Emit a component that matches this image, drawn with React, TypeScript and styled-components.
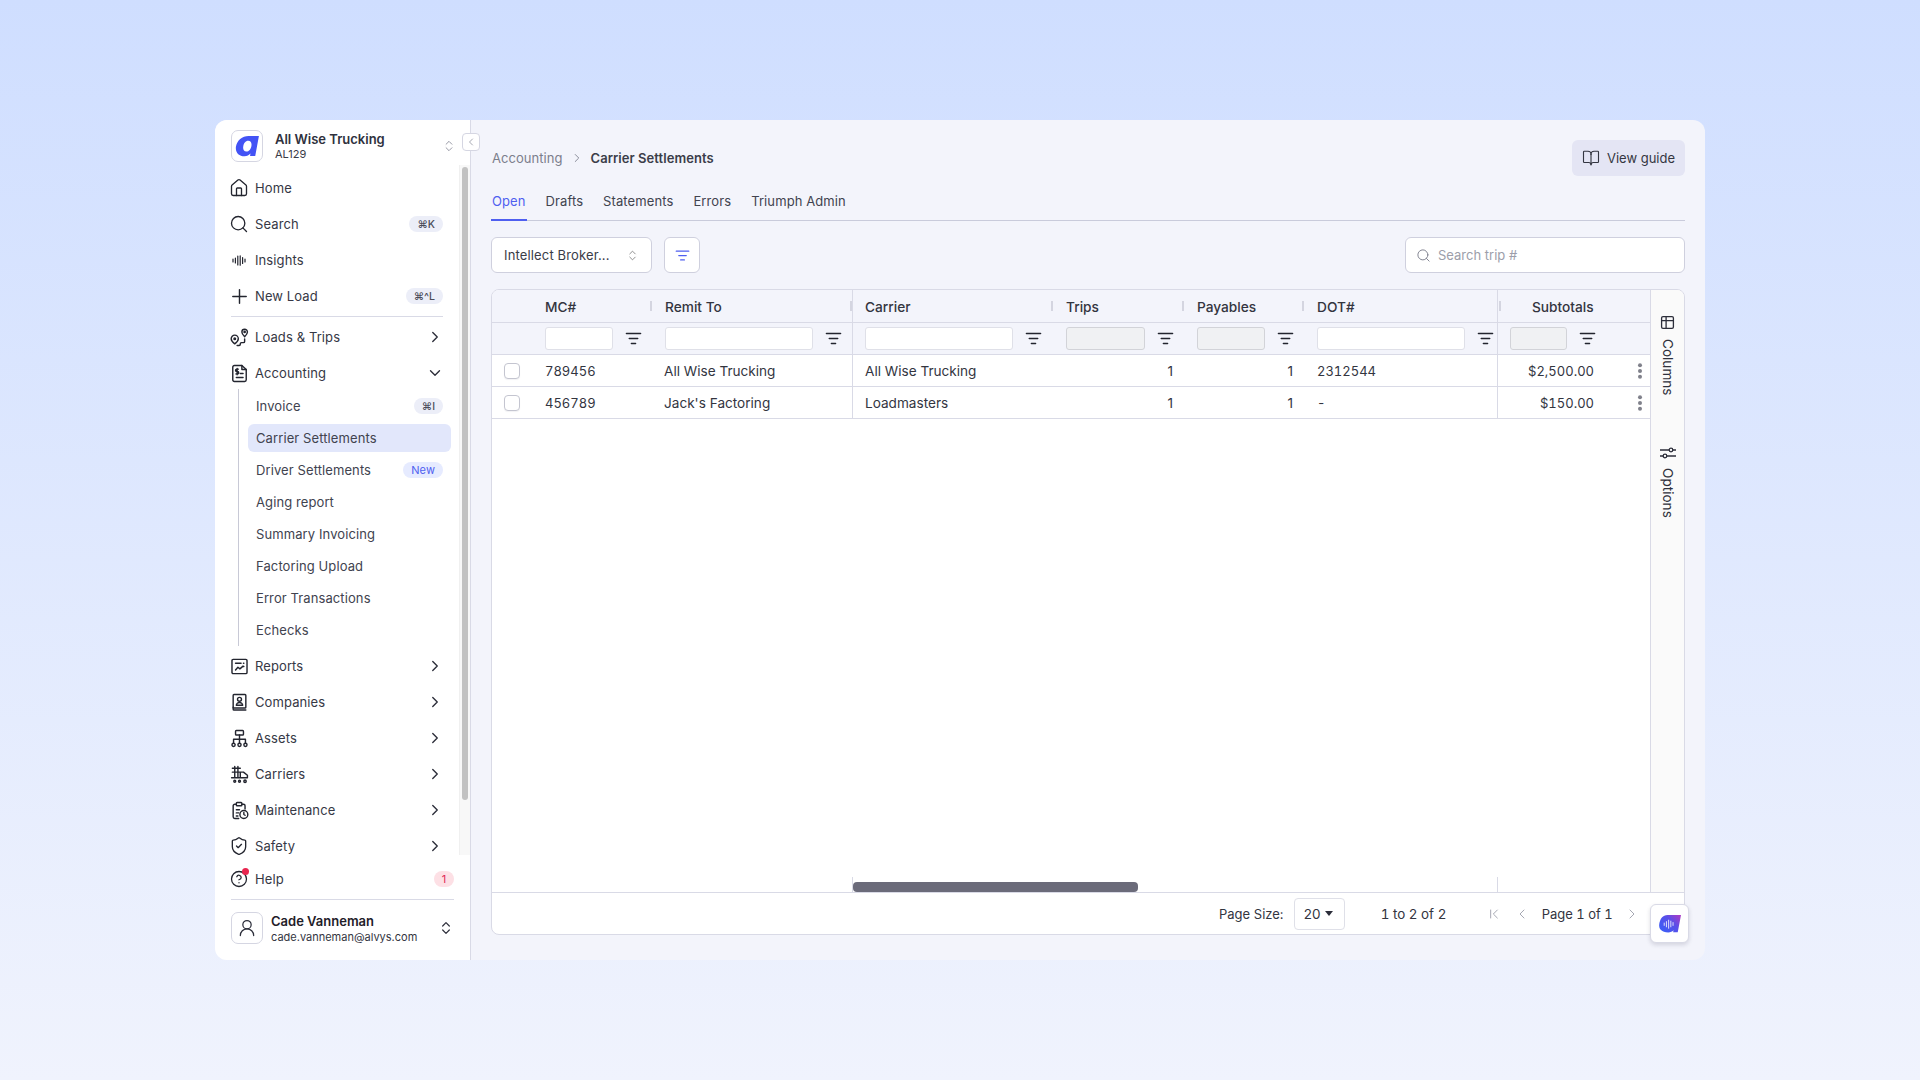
import React from "react";
import styled, { createGlobalStyle } from "styled-components";
import {
  House, Search, Plus, ChevronRight, ChevronDown, ChevronLeft, ChevronsUpDown,
  ShieldCheck, CircleHelp, UserRound, BookOpen, ListFilter, ChevronFirst,
} from "lucide-react";

const Global = createGlobalStyle`
  html, body { margin: 0; padding: 0; height: 100%; }
  body {
    font-family: Inter, "Liberation Sans", sans-serif;
    background: linear-gradient(180deg, #cfdeff 0%, #f0f3fd 100%);
    color: #2c2e3a;
    -webkit-font-smoothing: antialiased;
  }
  #root { height: 100vh; }
  * { box-sizing: border-box; }
  svg { flex: none; }
`;

const Page = styled.div`
  height: 100%;
  display: flex;
  align-items: center;
  justify-content: center;
`;
const Frame = styled.div`
  width: 1490px;
  height: 840px;
  display: flex;
  border-radius: 12px;
  overflow: hidden;
  background: #f3f4fb;
`;
const Sidebar = styled.aside`
  position: relative;
  width: 256px;
  flex: none;
  background: #fff;
  border-right: 1px solid #d9dae6;
  display: flex;
  flex-direction: column;
`;
const SideHead = styled.div`
  height: 45px;
  flex: none;
  padding: 10px 0 0 16px;
  display: flex;
  align-items: flex-start;
`;
const LogoBox = styled.div`
  width: 32px;
  height: 32px;
  border: 1px solid #d5d6e2;
  border-radius: 7px;
  display: flex;
  align-items: center;
  justify-content: center;
  flex: none;
  background: #fff;
`;
const OrgText = styled.div`
  margin-left: 12px;
  width: 166px;
  display: flex;
  flex-direction: column;
  padding-top: 1px;
`;
const OrgName = styled.div`
  font-size: 13px;
  line-height: 17px;
  font-weight: 600;
  color: #2f313d;
`;
const OrgCode = styled.div`
  font-size: 11px;
  line-height: 13px;
  color: #3a3c48;
`;
const OrgSwitch = styled.div`
  margin: 9px 0 0 1px;
  color: #8a8c99;
  display: flex;
`;
const CollapseBtn = styled.button`
  position: absolute;
  right: -10px;
  top: 13px;
  width: 18px;
  height: 18px;
  padding: 0;
  border: 1px solid #d5d6e2;
  border-radius: 4px;
  background: #fff;
  color: #8a8c99;
  display: flex;
  align-items: center;
  justify-content: center;
`;
const NavWrap = styled.div`
  height: 690px;
  flex: none;
  display: flex;
  overflow: hidden;
`;
const NavList = styled.nav`
  width: 244px;
  flex: none;
  padding: 5px 8px 0 16px;
  display: flex;
  flex-direction: column;
`;
const ScrollTrack = styled.div`
  width: 11px;
  flex: none;
  background: #f8f8f8;
  padding: 2px 2px 0 2px;
  border-left: 1px solid #f0f0f0;
`;
const ScrollThumb = styled.div`
  width: 6px;
  height: 633px;
  border-radius: 3px;
  background: #c2c2c2;
`;
const NavRow = styled.div`
  height: 36px;
  flex: none;
  width: 212px;
  display: flex;
  align-items: center;
  gap: 8px;
  font-size: 13px;
  color: #363845;
  letter-spacing: 0.1px;
`;
const NavIcon = styled.span`
  width: 16px;
  height: 16px;
  flex: none;
  display: flex;
  align-items: center;
  justify-content: center;
  color: #23252f;
`;
const NavLabel = styled.span`
  flex: 1;
  white-space: nowrap;
`;
const Kbd = styled.span`
  height: 16px;
  padding: 0 8px;
  border-radius: 8px;
  background: #eceef8;
  color: #4a4c58;
  font-size: 10.5px;
  font-weight: 500;
  display: flex;
  align-items: center;
  letter-spacing: 0;
`;
const NewBadge = styled.span`
  height: 16px;
  padding: 0 8px;
  border-radius: 8px;
  background: #e6ebff;
  color: #4f5ff0;
  font-size: 11px;
  display: flex;
  align-items: center;
`;
const Chevron = styled.span`
  width: 16px;
  height: 16px;
  display: flex;
  align-items: center;
  justify-content: center;
  color: #2c2e3a;
`;
const NavDivider = styled.div<{ $w?: number }>`
  height: 1px;
  flex: none;
  width: ${(p) => p.$w ?? 212}px;
  margin: 2px 0;
  background: #d9dae6;
`;
const SubList = styled.div`
  margin: -2px 0 2px 7px;
  border-left: 1px solid #c8c9d6;
  padding: 1px 0 0 9px;
  height: 257px;
  flex: none;
  width: 213px;
  display: flex;
  flex-direction: column;
`;
const SubRow = styled.div<{ $active?: boolean }>`
  height: 28px;
  margin: 2px 0;
  flex: none;
  padding: 0 8px;
  border-radius: 6px;
  display: flex;
  align-items: center;
  justify-content: space-between;
  font-size: 13px;
  letter-spacing: 0.1px;
  color: #41434f;
  background: ${(p) => (p.$active ? "#e2e7fb" : "transparent")};
`;
const SideFoot = styled.div`
  flex: 1;
  padding: 6px 16px 0;
  display: flex;
  flex-direction: column;
`;
const HelpRow = styled(NavRow)`
  width: 223px;
`;
const IconDotWrap = styled(NavIcon)`
  position: relative;
`;
const RedDot = styled.span`
  position: absolute;
  right: -2px;
  top: -3px;
  width: 7px;
  height: 7px;
  border-radius: 50%;
  background: #e8264f;
`;
const HelpBadge = styled.span`
  width: 20px;
  height: 16px;
  border-radius: 8px;
  background: #fde0e5;
  color: #df2a55;
  font-size: 11px;
  display: flex;
  align-items: center;
  justify-content: center;
`;
const UserRow = styled.div`
  margin-top: 10px;
  display: flex;
  align-items: center;
  width: 223px;
`;
const UserText = styled.div`
  margin-left: 8px;
  flex: 1;
  display: flex;
  flex-direction: column;
`;
const UserName = styled.div`
  font-size: 13px;
  line-height: 17px;
  font-weight: 600;
  color: #1f2029;
`;
const UserMail = styled.div`
  font-size: 11px;
  line-height: 14px;
  color: #33353f;
`;

const Main = styled.main`
  flex: 1;
  min-width: 0;
  padding: 20px 20px 25px 20px;
  display: flex;
  flex-direction: column;
`;
const TopBar = styled.div`
  height: 36px;
  flex: none;
  display: flex;
  align-items: center;
  justify-content: space-between;
`;
const Crumbs = styled.div`
  padding-left: 1px;
  display: flex;
  align-items: center;
  font-size: 13px;
  gap: 7px;
  letter-spacing: 0.05px;
`;
const CrumbDim = styled.span`
  color: #7c7e8c;
`;
const CrumbNow = styled.span`
  color: #3b3d49;
  font-weight: 600;
`;
const CrumbSep = styled.span`
  color: #7c7e8c;
  display: flex;
`;
const GuideBtn = styled.button`
  width: 113px;
  height: 36px;
  border: 0;
  border-radius: 6px;
  background: #e4e5f4;
  color: #343641;
  font: 400 13px Inter, sans-serif;
  display: flex;
  align-items: center;
  justify-content: center;
  gap: 7px;
`;
const Tabs = styled.div`
  margin-top: 14px;
  padding-left: 1px;
  height: 31px;
  flex: none;
  display: flex;
  gap: 20px;
  border-bottom: 1px solid #c9cbdb;
`;
const Tab = styled.div<{ $active?: boolean }>`
  height: 31px;
  padding: 0 1px;
  margin: 0 -1px;
  font-size: 13px;
  letter-spacing: 0.1px;
  line-height: 23px;
  color: ${(p) => (p.$active ? "#4f5ff0" : "#41434f")};
  border-bottom: 2px solid ${(p) => (p.$active ? "#4f5ff0" : "transparent")};
`;
const Toolbar = styled.div`
  margin-top: 16px;
  height: 36px;
  flex: none;
  display: flex;
  align-items: center;
  gap: 12px;
`;
const SelectBox = styled.div`
  width: 161px;
  height: 36px;
  padding: 0 12px;
  border: 1px solid #cfd0de;
  border-radius: 6px;
  background: #fff;
  display: flex;
  align-items: center;
  justify-content: space-between;
  font-size: 13px;
  letter-spacing: 0.15px;
  color: #3a3c48;
`;
const SquareBtn = styled.div`
  width: 36px;
  height: 36px;
  border: 1px solid #cfd0de;
  border-radius: 6px;
  background: #fff;
  color: #4f5ff0;
  display: flex;
  align-items: center;
  justify-content: center;
`;
const SearchBox = styled.div`
  margin-left: auto;
  width: 280px;
  height: 36px;
  padding: 0 10px;
  border: 1px solid #cfd0de;
  border-radius: 6px;
  background: #fff;
  display: flex;
  align-items: center;
  gap: 7px;
  font-size: 13px;
  color: #9c9eaa;
`;

const Grid = styled.section`
  margin-top: 16px;
  flex: 1;
  min-height: 0;
  border: 1px solid #d9dae6;
  border-radius: 8px;
  background: #fff;
  display: flex;
  flex-direction: column;
  overflow: hidden;
`;
const GridBody = styled.div`
  flex: 1;
  min-height: 0;
  display: flex;
`;
const GridMain = styled.div`
  flex: 1;
  min-width: 0;
  display: flex;
  flex-direction: column;
`;
const Row = styled.div<{ $h: number; $head?: boolean }>`
  height: ${(p) => p.$h}px;
  flex: none;
  display: flex;
  background: ${(p) => (p.$head ? "#f3f4fb" : "#fff")};
  border-bottom: 1px solid #d9dae6;
`;
const Cell = styled.div<{ $w: number; $edge?: boolean; $right?: boolean; $pad?: number }>`
  position: relative;
  width: ${(p) => p.$w}px;
  flex: none;
  display: flex;
  align-items: center;
  justify-content: ${(p) => (p.$right ? "flex-end" : "flex-start")};
  padding: 0 ${(p) => (p.$right ? 12 : 0)}px 0 ${(p) => p.$pad ?? 12}px;
  font-size: 13.6px;
  color: #33353f;
  white-space: nowrap;
  border-right: ${(p) => (p.$edge ? "1px solid #d9dae6" : "0")};
`;
const Num = styled.span`
  font-size: 13px;
  font-variant-numeric: tabular-nums;
`;
const HeadText = styled.span`
  padding-top: 2px;
  font-size: 13.7px;
  font-weight: 500;
  color: #33353f;
`;
const Resize = styled.span<{ $left?: boolean; $flush?: boolean }>`
  position: absolute;
  ${(p) => (p.$left ? "left: 1px;" : `right: ${p.$flush ? 0 : 1}px;`)}
  top: 11px;
  width: 2px;
  height: 10px;
  background: #d4d5e0;
`;
const FilterInput = styled.div<{ $w: number; $off?: boolean }>`
  width: ${(p) => p.$w}px;
  height: 23px;
  flex: none;
  border: 1px solid ${(p) => (p.$off ? "#d2d3d8" : "#dfe0e8")};
  border-radius: 3px;
  background: ${(p) => (p.$off ? "#f0f1f3" : "#fff")};
`;
const FilterIcon = styled.span`
  margin-left: 12px;
  display: flex;
  color: #23252f;
`;
const Check = styled.span`
  width: 16px;
  height: 16px;
  border: 1px solid #c4c5d0;
  border-radius: 4px;
  background: #fff;
  box-shadow: 0 1px 1px rgba(30, 30, 60, 0.06);
`;
const Amount = styled(Num)`
  margin-right: 44px;
`;
const Dots = styled.span`
  position: absolute;
  right: 7px;
  top: 8px;
  color: #80818b;
  display: flex;
`;
const Filler = styled.div`
  flex: 1;
`;
const HScroll = styled.div`
  height: 15px;
  flex: none;
  display: flex;
  align-items: flex-end;
`;
const HStubLeft = styled.div`
  width: 361px;
  height: 15px;
  flex: none;
  border-right: 1px solid #d9dae6;
`;
const HThumb = styled.div`
  width: 285px;
  height: 10px;
  flex: none;
  border-radius: 4px;
  background: #6b6b7a;
`;
const HStub = styled.div`
  margin-left: auto;
  width: 153px;
  height: 15px;
  border-left: 1px solid #d9dae6;
`;
const SidePanel = styled.div`
  width: 34px;
  flex: none;
  background: #fafafa;
  border-left: 1px solid #d9dae6;
  display: flex;
  flex-direction: column;
  align-items: center;
  padding-top: 25px;
`;
const SideTab = styled.div<{ $top?: number }>`
  margin-top: ${(p) => p.$top ?? 0}px;
  display: flex;
  flex-direction: column;
  align-items: center;
  gap: 9px;
  color: #2c2e3a;
`;
const VertText = styled.span`
  writing-mode: vertical-rl;
  font-size: 13.6px;
  line-height: 16px;
  color: #2f313c;
`;
const Pager = styled.div`
  height: 42px;
  flex: none;
  border-top: 1px solid #d9dae6;
  display: flex;
  align-items: center;
  font-size: 13px;
  color: #33353f;
  padding-left: 727px;
`;
const SizeBox = styled.div`
  margin-left: 10px;
  width: 51px;
  height: 32px;
  border: 1px solid #dfe0e8;
  border-radius: 4px;
  display: flex;
  align-items: center;
  justify-content: center;
  gap: 4px;
  padding-right: 2px;
  font-size: 13.5px;
`;
const Caret = styled.span`
  width: 0;
  height: 0;
  border-left: 4.5px solid transparent;
  border-right: 4.5px solid transparent;
  border-top: 5px solid #2c2e3a;
`;
const Range = styled.span`
  margin-left: 36px;
  width: 105px;
  font-size: 13.4px;
  font-variant-numeric: tabular-nums;
`;
const PageIcon = styled.span<{ $gap?: number }>`
  margin-left: ${(p) => p.$gap ?? 0}px;
  display: flex;
  color: #a6a8b3;
`;
const PageText = styled.span`
  margin: 0 11px 0 12px;
  font-variant-numeric: tabular-nums;
`;
const ChatBtn = styled.button`
  position: absolute;
  left: 1650px;
  top: 904px;
  width: 39px;
  height: 39px;
  padding: 0 1px 0 0;
  border: 1px solid #d9dae6;
  border-radius: 6px;
  background: #fff;
  box-shadow: 0 2px 4px rgba(30, 30, 60, 0.15);
  display: flex;
  align-items: center;
  justify-content: center;
`;

type IconProps = { size?: number };
const Stroke: React.FC<React.PropsWithChildren<IconProps>> = ({ size = 19, children }) => (
  <svg width={size} height={size} viewBox="0 0 24 24" fill="none" stroke="currentColor" strokeWidth={1.8} strokeLinecap="round" strokeLinejoin="round">
    {children}
  </svg>
);
const RouteIcon = () => (
  <Stroke>
    <path d="M6 9a4.500 4.500 0 0 0-4.500 4.500C1.500 16.500 6 20 6 20s4.500-3.500 4.500-6.500A4.500 4.500 0 0 0 6 9z" />
    <circle cx="6" cy="13.500" r="1" />
    <path d="M18.500 1.500A3.500 3.500 0 0 0 15 5c0 2.500 3.500 6 3.500 6S22 7.500 22 5a3.500 3.500 0 0 0-3.500-3.500z" />
    <circle cx="18.500" cy="5" r=".8" />
    <path d="M18.500 14v3a1.500 1.500 0 0 1-1.500 1.500h-2.500a1.500 1.500 0 0 0-1.500 1.500v.5a1.500 1.500 0 0 1-1.500 1.500H9" />
  </Stroke>
);
const DocIcon = () => (
  <Stroke>
    <path d="M3.500 4a2 2 0 0 1 2-2h9.500l5.500 5v13a2 2 0 0 1-2 2h-13a2 2 0 0 1-2-2z" />
    <path d="M15 2v5h5.500" />
    <path d="M10.500 6.500H8.500a1.300 1.300 0 0 0 0 3h1a1.300 1.300 0 0 1 0 3H7.500M9 5.500v8" />
    <path d="M13 12h3.500M8 17h8.500" />
  </Stroke>
);
const ReportIcon = () => (
  <Stroke>
    <rect x="2.500" y="3" width="19" height="18" rx="1.500" />
    <path d="M7 8h7M17 8h.5M17 12h.5M7 16.500l3-3.500 2.500 2 4-3.500" />
  </Stroke>
);
const BookPersonIcon = () => (
  <Stroke>
    <path d="M5 2h14a1 1 0 0 1 1 1v15a1 1 0 0 1-1 1H5a1 1 0 0 1-1-1V3a1 1 0 0 1 1-1z" />
    <path d="M4 18v2.500a1 1 0 0 0 1 1h15" />
    <circle cx="12" cy="8" r="2.500" />
    <path d="M8 15.500c0-2 2-3.500 4-3.500s4 1.500 4 3.500z" />
  </Stroke>
);
const TreeIcon = () => (
  <Stroke>
    <rect x="7" y="2" width="10" height="5.500" rx="1" />
    <path d="M12 7.500V18M4.500 18v-5h15v5" />
    <circle cx="4.500" cy="20" r="2" />
    <circle cx="12" cy="20" r="2" />
    <circle cx="19.500" cy="20" r="2" />
  </Stroke>
);
const TruckIcon = () => (
  <Stroke>
    <path d="M3 4h10M3 9h10M6 2v14M10 2v14M2 16h20v-3l-5-4h-4v7" />
    <circle cx="6" cy="20.500" r="1.200" />
    <circle cx="12" cy="20.500" r="1.200" />
    <circle cx="19" cy="20.500" r="1.500" />
  </Stroke>
);
const ClipClockIcon = () => (
  <Stroke>
    <rect x="8" y="2" width="7" height="4" rx="1" />
    <path d="M15 4h2a2 2 0 0 1 2 2v4M8 4H6a2 2 0 0 0-2 2v14a2 2 0 0 0 2 2h5" />
    <path d="M8 11h4M8 15h3M8 19h2" />
    <circle cx="17.500" cy="17" r="5" />
    <path d="M17.500 14.500V17l1.500 1" />
  </Stroke>
);
const BarsIcon = () => (
  <svg width="14" height="11" viewBox="0 0 14 11" fill="none" stroke="currentColor" strokeWidth="1.200" strokeLinecap="round">
    <path d="M1 4v3M3.400 3v5M5.800 1v9M8.200 .8v9.400M10.600 2.500v6M13 4v3" />
  </svg>
);
const TableIcon = () => (
  <svg width="15" height="15" viewBox="0 0 16 16" fill="none" stroke="currentColor" strokeWidth="1.400">
    <rect x="1.700" y="1.700" width="12.600" height="12.600" rx="1.500" />
    <path d="M1.700 6h12.600M6.500 1.700v12.600" />
  </svg>
);
const SliderIcon = () => (
  <svg width="16" height="12" viewBox="0 0 16 12" fill="none" stroke="currentColor" strokeWidth="1.300">
    <path d="M0 3h9M13 3h3M0 9h3M7 9h9" />
    <circle cx="11" cy="3" r="1.800" />
    <circle cx="5" cy="9" r="1.800" />
  </svg>
);
const KebabIcon = () => (
  <svg width="6" height="16" viewBox="0 0 6 16" fill="currentColor">
    <circle cx="3" cy="2.200" r="2" />
    <circle cx="3" cy="8" r="2" />
    <circle cx="3" cy="13.800" r="2" />
  </svg>
);
const BrandA: React.FC<{ size: number; fill: string }> = ({ size, fill }) => (
  <svg width={size} height={size} viewBox="0 0 24 24">
    <path
      fillRule="evenodd"
      fill={fill}
      d="M13.500 2.700H23l-3.400 18.500h-4.800l.4-2.200c-1.300 1.400-3.200 2.500-5.500 2.500C4.500 21.500 1 17.800 1.800 12.500 2.700 6.900 7.500 2.700 13.500 2.700zm-.3 4.500c-2.600 0-4.300 2.400-4.700 5.400-.4 2.700.8 4.500 2.900 4.500 2.500 0 4.300-2.400 4.700-5.400.4-2.700-.8-4.500-2.900-4.500z"
    />
  </svg>
);
const ChatLogo = () => (
  <svg width="23" height="23" viewBox="0 0 24 24">
    <defs>
      <linearGradient id="chatg" x1="0.100" y1="0.800" x2="1" y2="0.100">
        <stop offset="0" stopColor="#3f5cf5" />
        <stop offset="0.550" stopColor="#5a4fe8" />
        <stop offset="1" stopColor="#a83cc6" />
      </linearGradient>
    </defs>
    <path fill="url(#chatg)" d="M10 3h14l-3.400 18h-4.800l.4-2c-1.300 1.400-3.200 2.300-5.500 2.300C4 21.300 .5 17.800 1.300 12.500 2.200 6.900 5 3 10 3z" />
    <path stroke="#fff" strokeOpacity=".85" strokeWidth="1" strokeLinecap="round" fill="none" d="M6.500 11.500v2.500M8.800 10v5.500M11.100 8.500v8.500M13.400 9.500v6M15.700 11v3" />
  </svg>
);

const Sm = { size: 20, strokeWidth: 1.6 };
const Chev = { size: 18, strokeWidth: 1.8 };
const topItems = [
  { label: "Home", icon: <House {...Sm} /> },
  { label: "Search", icon: <Search {...Sm} />, kbd: "⌘K" },
  { label: "Insights", icon: <BarsIcon /> },
  { label: "New Load", icon: <Plus size={23} strokeWidth={1.5} />, kbd: "⌘^L" },
];
const subItems = ["Invoice", "Carrier Settlements", "Driver Settlements", "Aging report", "Summary Invoicing", "Factoring Upload", "Error Transactions", "Echecks"];
const lowerItems = [
  { label: "Reports", icon: <ReportIcon /> },
  { label: "Companies", icon: <BookPersonIcon /> },
  { label: "Assets", icon: <TreeIcon /> },
  { label: "Carriers", icon: <TruckIcon /> },
  { label: "Maintenance", icon: <ClipClockIcon /> },
  { label: "Safety", icon: <ShieldCheck {...Sm} /> },
];

const W = { sel: 41, mc: 120, remit: 200, carrier: 201, trips: 131, pay: 120, dot: 193, sub: 152 };
const headers: { key: keyof typeof W; label: string; edge?: boolean; input: number; off?: boolean; noMark?: boolean }[] = [
  { key: "mc", label: "MC#", input: 68 },
  { key: "remit", label: "Remit To", input: 148, edge: true },
  { key: "carrier", label: "Carrier", input: 148 },
  { key: "trips", label: "Trips", input: 79, off: true },
  { key: "pay", label: "Payables", input: 68, off: true },
  { key: "dot", label: "DOT#", input: 148, edge: true, noMark: true },
];
const rows = [
  { mc: "789456", remit: "All Wise Trucking", carrier: "All Wise Trucking", trips: "1", pay: "1", dot: "2312544", sub: "$2,500.00" },
  { mc: "456789", remit: "Jack's Factoring", carrier: "Loadmasters", trips: "1", pay: "1", dot: "-", sub: "$150.00" },
];
const FilterGlyph = () => <ListFilter size={17} strokeWidth={2} />;

export default function App() {
  return (
    <Page>
      <Global />
      <Frame>
        <Sidebar>
          <SideHead>
            <LogoBox><BrandA size={26} fill="#4353f5" /></LogoBox>
            <OrgText>
              <OrgName>All Wise Trucking</OrgName>
              <OrgCode>AL129</OrgCode>
            </OrgText>
            <OrgSwitch><ChevronsUpDown size={14} strokeWidth={1.5} /></OrgSwitch>
          </SideHead>
          <CollapseBtn><ChevronLeft size={12} strokeWidth={1.5} /></CollapseBtn>
          <NavWrap>
            <NavList>
              {topItems.map((it) => (
                <NavRow key={it.label}>
                  <NavIcon>{it.icon}</NavIcon>
                  <NavLabel>{it.label}</NavLabel>
                  {it.kbd && <Kbd>{it.kbd}</Kbd>}
                </NavRow>
              ))}
              <NavDivider />
              <NavRow>
                <NavIcon><RouteIcon /></NavIcon>
                <NavLabel>Loads &amp; Trips</NavLabel>
                <Chevron><ChevronRight {...Chev} /></Chevron>
              </NavRow>
              <NavRow>
                <NavIcon><DocIcon /></NavIcon>
                <NavLabel>Accounting</NavLabel>
                <Chevron><ChevronDown {...Chev} /></Chevron>
              </NavRow>
              <SubList>
                {subItems.map((s) => (
                  <SubRow key={s} $active={s === "Carrier Settlements"}>
                    {s}
                    {s === "Invoice" && <Kbd>⌘I</Kbd>}
                    {s === "Driver Settlements" && <NewBadge>New</NewBadge>}
                  </SubRow>
                ))}
              </SubList>
              {lowerItems.map((it) => (
                <NavRow key={it.label}>
                  <NavIcon>{it.icon}</NavIcon>
                  <NavLabel>{it.label}</NavLabel>
                  <Chevron><ChevronRight {...Chev} /></Chevron>
                </NavRow>
              ))}
            </NavList>
            <ScrollTrack><ScrollThumb /></ScrollTrack>
          </NavWrap>
          <SideFoot>
            <HelpRow>
              <IconDotWrap><CircleHelp size={18} strokeWidth={1.7} /><RedDot /></IconDotWrap>
              <NavLabel>Help</NavLabel>
              <HelpBadge>1</HelpBadge>
            </HelpRow>
            <NavDivider $w={223} />
            <UserRow>
              <LogoBox><UserRound size={20} strokeWidth={1.5} /></LogoBox>
              <UserText>
                <UserName>Cade Vanneman</UserName>
                <UserMail>cade.vanneman@alvys.com</UserMail>
              </UserText>
              <ChevronsUpDown size={16} strokeWidth={1.8} />
            </UserRow>
          </SideFoot>
        </Sidebar>
        <Main>
          <TopBar>
            <Crumbs>
              <CrumbDim>Accounting</CrumbDim>
              <CrumbSep><ChevronRight size={14} strokeWidth={1.5} /></CrumbSep>
              <CrumbNow>Carrier Settlements</CrumbNow>
            </Crumbs>
            <GuideBtn><BookOpen size={18} strokeWidth={1.5} />View guide</GuideBtn>
          </TopBar>
          <Tabs>
            <Tab $active>Open</Tab>
            <Tab>Drafts</Tab>
            <Tab>Statements</Tab>
            <Tab>Errors</Tab>
            <Tab>Triumph Admin</Tab>
          </Tabs>
          <Toolbar>
            <SelectBox>Intellect Broker...<ChevronsUpDown size={13} strokeWidth={1.5} color="#777" /></SelectBox>
            <SquareBtn><ListFilter size={15} strokeWidth={2} /></SquareBtn>
            <SearchBox><Search size={15} strokeWidth={1.5} color="#7c7e8c" />Search trip #</SearchBox>
          </Toolbar>
          <Grid>
            <GridBody>
              <GridMain>
                <Row $h={33} $head>
                  <Cell $w={W.sel} />
                  {headers.map((h) => (
                    <Cell key={h.key} $w={W[h.key]} $edge={h.edge}>
                      <HeadText>{h.label}</HeadText>
                      {!h.noMark && <Resize $flush={h.edge} />}
                    </Cell>
                  ))}
                  <Cell $w={W.sub} $pad={34}>
                    <Resize $left />
                    <HeadText>Subtotals</HeadText>
                  </Cell>
                </Row>
                <Row $h={32} $head>
                  <Cell $w={W.sel} />
                  {headers.map((h) => (
                    <Cell key={h.key} $w={W[h.key]} $edge={h.edge}>
                      <FilterInput $w={h.input} $off={h.off} />
                      <FilterIcon><FilterGlyph /></FilterIcon>
                    </Cell>
                  ))}
                  <Cell $w={W.sub}>
                    <FilterInput $w={57} $off />
                    <FilterIcon><FilterGlyph /></FilterIcon>
                  </Cell>
                </Row>
                {rows.map((r) => (
                  <Row key={r.mc} $h={32}>
                    <Cell $w={W.sel}><Check /></Cell>
                    <Cell $w={W.mc}><Num>{r.mc}</Num></Cell>
                    <Cell $w={W.remit} $edge $pad={11}>{r.remit}</Cell>
                    <Cell $w={W.carrier}>{r.carrier}</Cell>
                    <Cell $w={W.trips} $right>{r.trips}</Cell>
                    <Cell $w={W.pay} $right>{r.pay}</Cell>
                    <Cell $w={W.dot} $edge><Num>{r.dot}</Num></Cell>
                    <Cell $w={W.sub} $right>
                      <Amount>{r.sub}</Amount>
                      <Dots><KebabIcon /></Dots>
                    </Cell>
                  </Row>
                ))}
                <Filler />
                <HScroll>
                  <HStubLeft />
                  <HThumb />
                  <HStub />
                </HScroll>
              </GridMain>
              <SidePanel>
                <SideTab>
                  <TableIcon />
                  <VertText>Columns</VertText>
                </SideTab>
                <SideTab $top={51}>
                  <SliderIcon />
                  <VertText>Options</VertText>
                </SideTab>
              </SidePanel>
            </GridBody>
            <Pager>
              Page Size:
              <SizeBox>20<Caret /></SizeBox>
              <Range>1 to 2 of 2</Range>
              <PageIcon><ChevronFirst size={16} strokeWidth={1.5} /></PageIcon>
              <PageIcon $gap={12}><ChevronLeft size={16} strokeWidth={1.5} /></PageIcon>
              <PageText>Page 1 of 1</PageText>
              <PageIcon><ChevronRight size={16} strokeWidth={1.5} /></PageIcon>
            </Pager>
          </Grid>
        </Main>
      </Frame>
      <ChatBtn><ChatLogo /></ChatBtn>
    </Page>
  );
}
